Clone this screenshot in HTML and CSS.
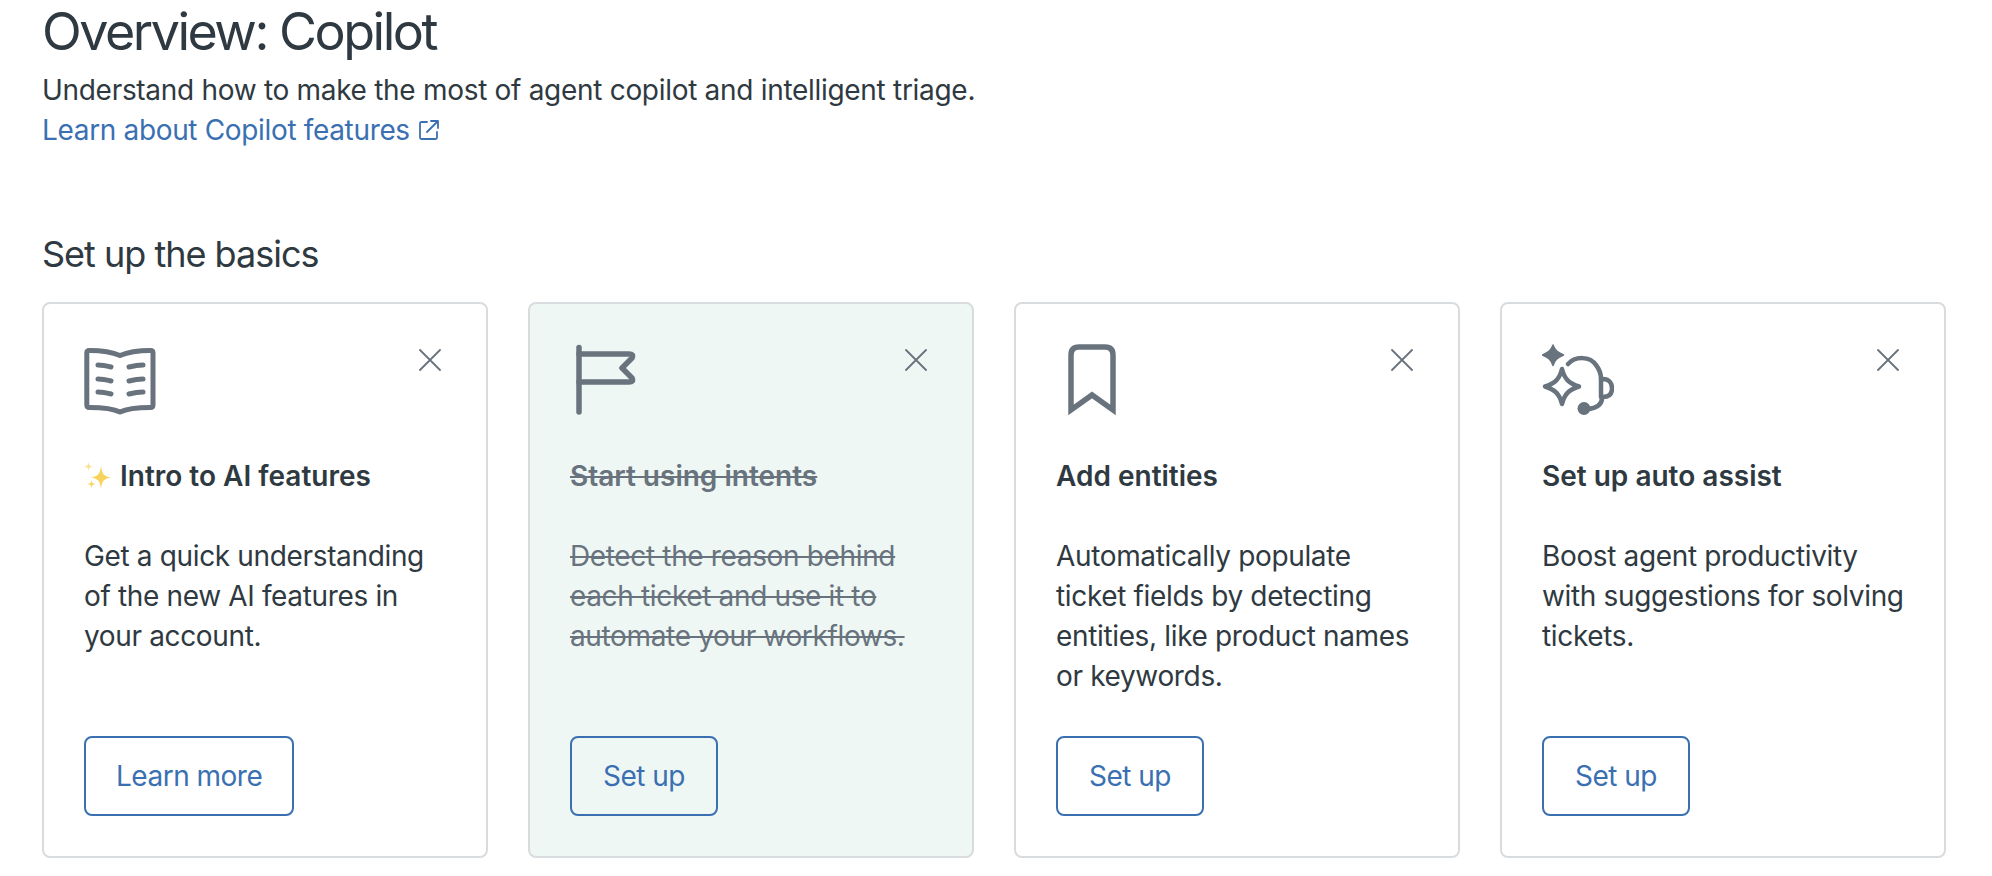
FILE: index.html
```html
<!DOCTYPE html>
<html lang="en">
<head>
<meta charset="utf-8">
<title>Overview: Copilot</title>
<link rel="stylesheet" href="styles.css">
</head>
<body>
<main class="page">
  <h1 class="page-title">Overview: Copilot</h1>
  <p class="page-sub">Understand how to make the most of agent copilot and intelligent triage.</p>
  <a class="page-link" href="#">Learn about Copilot features
    <svg class="ext-icon" viewBox="0 0 20 20" fill="none" stroke="currentColor" stroke-width="1.8" stroke-linecap="round" stroke-linejoin="round"><path d="M8 2H2.500Q1 2 1 3.500V17.500Q1 19 2.500 19H16.500Q18 19 18 17.500V12"/><path d="M8 12L18.500 1.500M12 1H19V8"/></svg>
  </a>
  <h2 class="section-title">Set up the basics</h2>
  <div class="cards">
    <article class="card">
      <div class="card-top">
        <svg class="card-icon" viewBox="0 0 72 72" fill="none" stroke="#68737d" stroke-width="5" stroke-linecap="round" stroke-linejoin="round"><path d="M36 11.500C28 8 16 6.500 5.500 6.500Q2.800 6.500 2.800 9V61Q2.800 63.500 5.500 63.500C16 63.500 28 64 36 68C44 64 56 63.500 66.500 63.500Q69 63.500 69 61V9Q69 6.500 66.500 6.500C56 6.500 44 8 36 11.500Z"/><path d="M14 21C19 21 23 22 27 23M14 35C19 35 23 36 27 37M14 48C19 48 23 49 27 50M45 23C49 22 53 21 59 21M45 37C49 36 53 35 59 35M45 50C49 49 53 48 59 48"/></svg>
        <svg class="close-icon" viewBox="0 0 22 22" fill="none" stroke="#68737d" stroke-width="1.800" stroke-linecap="round"><path d="M1 1L21 21M21 1L1 21"/></svg>
      </div>
      <h3 class="card-title"><svg class="sparkle" viewBox="0 0 28 28"><path fill="#f7d35c" d="M17 3.500C18 12 19.500 14 27 15.500C19.500 17 18 19 17 27C16 19 14.500 17 7 15.500C14.500 14 16 12 17 3.500Z"/><path fill="#fbe08a" d="M4.500 0C5 3.500 5.500 4 9 4.500C5.500 5 5 5.500 4.500 9C4 5.500 3.500 5 0 4.500C3.500 4 4 3.500 4.500 0Z"/><path fill="#f9d566" d="M7.500 18C8 21 8.500 21.500 12 22C8.500 22.500 8 23 7.500 27C7 23 6.500 22.500 3 22C6.500 21.500 7 21 7.500 18Z"/></svg>Intro to AI features</h3>
      <p class="card-text">Get a quick understanding of the new AI features in your account.</p>
      <a class="btn" href="#">Learn more</a>
    </article>
    <article class="card card-done">
      <div class="card-top">
        <svg class="card-icon" viewBox="0 0 72 72" fill="none" stroke="#68737d" stroke-width="5.500" stroke-linecap="round" stroke-linejoin="round"><path d="M9 3.500V68"/><path d="M9 10H59Q64 10 62 14L52 24L62 34Q64 38 59 38H9"/></svg>
        <svg class="close-icon" viewBox="0 0 22 22" fill="none" stroke="#68737d" stroke-width="1.800" stroke-linecap="round"><path d="M1 1L21 21M21 1L1 21"/></svg>
      </div>
      <h3 class="card-title">Start using intents</h3>
      <p class="card-text">Detect the reason behind each ticket and use it to automate your workflows.</p>
      <a class="btn" href="#">Set up</a>
    </article>
    <article class="card">
      <div class="card-top">
        <svg class="card-icon" viewBox="0 0 72 72" fill="none" stroke="#68737d" stroke-width="5.500" stroke-miterlimit="6"><path d="M15 66V11Q15 3 23 3H49Q57 3 57 11V66L36 51Z"/></svg>
        <svg class="close-icon" viewBox="0 0 22 22" fill="none" stroke="#68737d" stroke-width="1.800" stroke-linecap="round"><path d="M1 1L21 21M21 1L1 21"/></svg>
      </div>
      <h3 class="card-title">Add entities</h3>
      <p class="card-text">Automatically populate ticket fields by detecting entities, like product names or keywords.</p>
      <a class="btn" href="#">Set up</a>
    </article>
    <article class="card">
      <div class="card-top">
        <svg class="card-icon" viewBox="0 0 72 72" fill="none" stroke="#68737d" stroke-width="4.500" stroke-linecap="round" stroke-linejoin="round"><path fill="#68737d" stroke-width="1.500" d="M11 1C13 6.500 15.500 8.500 21.500 11C15.500 13.500 13 15.500 11 21.500C9 15.500 6.500 13.500 0.500 11C6.500 8.500 9 6.500 11 1Z"/><path d="M20 25C22.500 35 27 39.500 37 42.500C27 45.500 22.500 50 20 60C17.500 50 13 45.500 3 42.500C13 39.500 17.500 35 20 25Z"/><path d="M26 20C33 12 48 12 54 21C58 26 59 30 59 35"/><path d="M59 35H61C67 35 70 39 70 44.500C70 50 67 53 61 53H59Z"/><path d="M60 54C60 60 55 64 46 65"/><circle cx="42" cy="64.500" r="6.500" fill="#68737d" stroke="none"/></svg>
        <svg class="close-icon" viewBox="0 0 22 22" fill="none" stroke="#68737d" stroke-width="1.800" stroke-linecap="round"><path d="M1 1L21 21M21 1L1 21"/></svg>
      </div>
      <h3 class="card-title">Set up auto assist</h3>
      <p class="card-text">Boost agent productivity with suggestions for solving tickets.</p>
      <a class="btn" href="#">Set up</a>
    </article>
  </div>
</main>
</body>
</html>
```

FILE: styles.css
```css
* { box-sizing: border-box; }
html, body { margin: 0; height: 100%; background: #fff; }
body { overflow: hidden; font-family: Inter, "Liberation Sans", sans-serif; color: #2f3941; }
.page { padding: 0 47px 0 42px; }
.page-title { margin: 0 0 6px; font-size: 52px; line-height: 64px; font-weight: 400; letter-spacing: -2.5px; }
.page-sub { margin: 0; font-size: 28px; line-height: 40px; letter-spacing: -0.3px; }
.page-link { display: inline-flex; align-items: center; gap: 9px; font-size: 28px; line-height: 40px; letter-spacing: -0.34px; color: #3a70b2; text-decoration: none; }
.ext-icon { width: 20px; height: 20px; flex: none; }
.section-title { margin: 82px 0 26px; font-size: 36px; line-height: 44px; font-weight: 400; letter-spacing: -1px; }
.cards { display: grid; grid-template-columns: repeat(4, 446px); gap: 40px; }
.card { display: flex; flex-direction: column; height: 556px; padding: 40px; border: 2px solid #d8dcde; border-radius: 8px; background: #fff; }
.card-top { display: flex; justify-content: space-between; align-items: flex-start; height: 72px; }
.card-icon { width: 72px; height: 72px; flex: none; }
.close-icon { width: 22px; height: 22px; flex: none; margin: 5px 5px 0 0; }
.card-title { display: flex; align-items: center; margin: 40px 0 0; font-size: 28px; line-height: 40px; font-weight: 600; }
.sparkle { width: 28px; height: 28px; flex: none; margin-right: 8px; }
.card-text { margin: 40px -4px 0 0; font-size: 28px; line-height: 40px; letter-spacing: -0.35px; }
.btn { display: inline-flex; align-items: center; justify-content: center; align-self: flex-start; min-width: 148px; height: 80px; margin-top: auto; padding: 0 30px; border: 2px solid #3a70b2; border-radius: 8px; font-size: 28px; letter-spacing: -0.5px; color: #3a70b2; text-decoration: none; }
.card-done { background: #eef7f4; }
.card-done .card-title, .card-done .card-text { color: #68737d; text-decoration: line-through; }
```
